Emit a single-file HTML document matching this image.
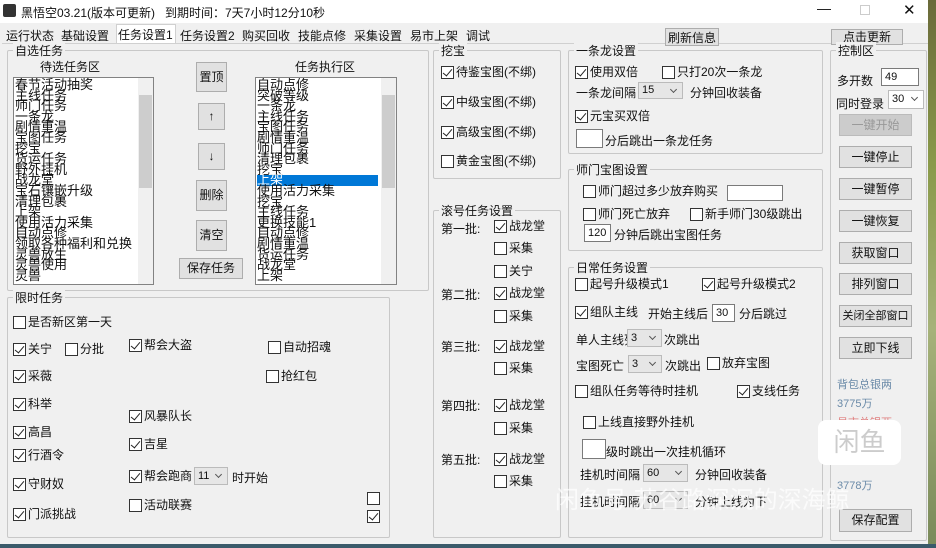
<!DOCTYPE html>
<html><head><meta charset="utf-8"><style>
*{box-sizing:border-box;margin:0;padding:0}
body{width:936px;height:548px;overflow:hidden;background:#f0f0f0;font-family:"Liberation Sans","Noto Sans CJK SC",sans-serif;font-size:12px;color:#111;position:relative}
.a{position:absolute;white-space:nowrap}
.g{position:absolute;border:1px solid #c8c8c8;border-radius:2px}
.g>b{position:absolute;top:-9px;left:5px;background:#f0f0f0;font-weight:normal;padding:0 2px;font-size:12px}
.k{position:absolute;white-space:nowrap;line-height:14px;display:flex;align-items:center}
.k i{display:inline-block;width:13px;height:13px;border:1px solid #333;background:#fff;margin-right:2px;position:relative}
.k.on i::after{content:"";position:absolute;left:3px;top:0px;width:4px;height:8px;border:solid #222;border-width:0 1.5px 1.5px 0;transform:rotate(40deg)}
.bt{position:absolute;background:#e1e1e1;border:1px solid #adadad;text-align:center;font-size:12px;white-space:nowrap;overflow:hidden}
.in{position:absolute;background:#fff;border:1px solid #7a7a7a;font-size:11px;padding-left:3px}
.sel{position:absolute;background:#e6e6e6;border:1px solid #bbb;font-size:11px;padding-left:3px}
.sel::after{content:"";position:absolute;right:6px;top:4px;width:4px;height:4px;border:solid #555;border-width:0 1px 1px 0;transform:rotate(45deg)}
.list{position:absolute;background:#fff;border:1px solid #828282;overflow:hidden;font-size:13px;line-height:10.6px;padding:2px 0 0 1px}
.sb{position:absolute;top:0;right:0;width:15px;height:100%;background:#f0f0f0}
.sb div{position:absolute;left:1px;width:13px;background:#cdcdcd}
</style></head><body>
<div class="a" style="left:0;top:0;width:936px;height:23px;background:#fff"></div>
<div class="a" style="left:3px;top:4px;width:13px;height:13px;background:#333;border-radius:2px"></div>
<div class="a" style="left:21px;top:4px;font-size:12px">黑悟空03.21(版本可更新)</div>
<div class="a" style="left:165px;top:4px;font-size:12px">到期时间：7天7小时12分10秒</div>
<div class="a" style="left:817px;top:0;font-size:14px">—</div>
<div class="a" style="left:860px;top:5px;width:10px;height:10px;border:1px solid #ccc"></div>
<div class="a" style="left:903px;top:1px;font-size:15px">✕</div>
<div class="a" style="left:928px;top:0;width:8px;height:548px;background:linear-gradient(#6a6a3a,#8a9a4a 30%,#a6b27a 60%,#7a8a5a)"></div>
<div class="a" style="left:116px;top:24px;width:60px;height:20px;background:#fff;border:1px solid #d0d0d0;border-bottom:none"></div>
<div class="a" style="left:6px;top:27px">运行状态</div>
<div class="a" style="left:61px;top:27px">基础设置</div>
<div class="a" style="left:118px;top:26px">任务设置1</div>
<div class="a" style="left:180px;top:27px">任务设置2</div>
<div class="a" style="left:242px;top:27px">购买回收</div>
<div class="a" style="left:298px;top:27px">技能点修</div>
<div class="a" style="left:354px;top:27px">采集设置</div>
<div class="a" style="left:410px;top:27px">易市上架</div>
<div class="a" style="left:466px;top:27px">调试</div>
<div class="a" style="left:2px;top:43px;width:926px;height:1px;background:#d0d0d0"></div>
<div class="bt" style="left:665px;top:28px;width:54px;height:18px">刷新信息</div>
<div class="bt" style="left:831px;top:29px;width:72px;height:16px;line-height:14px">点击更新</div>

<div class="g" style="left:7px;top:50px;width:422px;height:241px"><b>自选任务</b></div>
<div class="a" style="left:40px;top:58px">待选任务区</div>
<div class="a" style="left:295px;top:58px">任务执行区</div>
<div class="list" style="left:13px;top:77px;width:141px;height:208px">春节活动抽奖<br>主线任务<br>师门任务<br>一条龙<br>剧情重温<br>宝图任务<br>挖宝<br>货运任务<br>野外挂机<br>战龙堂<br>宝石镶嵌升级<br>清理包裹<br>上架<br>使用活力采集<br>自动点修<br>领取各种福利和兑换<br>灵兽放生<br>灵兽使用<br>灵兽<div class="sb"><div style="top:17px;height:93px"></div></div></div>
<div class="list" style="left:255px;top:77px;width:142px;height:208px">自动点修<br>突破等级<br>一条龙<br>主线任务<br>宝图任务<br>剧情重温<br>师门任务<br>清理包裹<br>挖宝<br><span style="background:#0078d7;color:#fff;display:inline-block;width:121px;height:10.6px;line-height:10px">上架</span><br>使用活力采集<br>挖宝<br>主线任务<br>更换技能1<br>自动点修<br>剧情重温<br>货运任务<br>战龙堂<br>上架<div class="sb"><div style="top:17px;height:93px"></div></div></div>
<div class="bt" style="left:196px;top:62px;width:31px;height:30px;line-height:28px">置顶</div>
<div class="bt" style="left:198px;top:103px;width:27px;height:27px;line-height:25px">↑</div>
<div class="bt" style="left:198px;top:143px;width:27px;height:27px;line-height:25px">↓</div>
<div class="bt" style="left:196px;top:180px;width:31px;height:31px;line-height:29px">删除</div>
<div class="bt" style="left:196px;top:220px;width:31px;height:31px;line-height:29px">清空</div>
<div class="bt" style="left:179px;top:258px;width:64px;height:21px;line-height:19px">保存任务</div>

<div class="g" style="left:7px;top:297px;width:383px;height:241px"><b>限时任务</b></div>
<div class="k" style="left:13px;top:315px"><i></i>是否新区第一天</div>
<div class="k on" style="left:13px;top:342px"><i></i>关宁</div>
<div class="k" style="left:65px;top:342px"><i></i>分批</div>
<div class="k on" style="left:13px;top:369px"><i></i>采薇</div>
<div class="k on" style="left:13px;top:397px"><i></i>科举</div>
<div class="k on" style="left:13px;top:425px"><i></i>高昌</div>
<div class="k on" style="left:13px;top:448px"><i></i>行酒令</div>
<div class="k on" style="left:13px;top:477px"><i></i>守财奴</div>
<div class="k on" style="left:13px;top:507px"><i></i>门派挑战</div>
<div class="k on" style="left:129px;top:338px"><i></i>帮会大盗</div>
<div class="k on" style="left:129px;top:409px"><i></i>风暴队长</div>
<div class="k on" style="left:129px;top:437px"><i></i>吉星</div>
<div class="k on" style="left:129px;top:469px"><i></i>帮会跑商</div>
<div class="sel" style="left:194px;top:467px;width:34px;height:18px;line-height:16px">11</div>
<div class="a" style="left:232px;top:469px">时开始</div>
<div class="k" style="left:129px;top:498px"><i></i>活动联赛</div>
<div class="k" style="left:268px;top:340px"><i></i>自动招魂</div>
<div class="k" style="left:266px;top:369px"><i></i>抢红包</div>
<div class="k" style="left:367px;top:492px"><i></i></div>
<div class="k on" style="left:367px;top:510px"><i></i></div>

<div class="g" style="left:433px;top:50px;width:128px;height:129px"><b>挖宝</b></div>
<div class="k on" style="left:441px;top:65px"><i></i>待鉴宝图(不绑)</div>
<div class="k on" style="left:441px;top:95px"><i></i>中级宝图(不绑)</div>
<div class="k on" style="left:441px;top:125px"><i></i>高级宝图(不绑)</div>
<div class="k" style="left:441px;top:154px"><i></i>黄金宝图(不绑)</div>

<div class="g" style="left:433px;top:210px;width:128px;height:328px"><b>滚号任务设置</b></div>
<div class="a" style="left:441px;top:220px">第一批:</div>
<div class="k on" style="left:494px;top:219px"><i></i>战龙堂</div>
<div class="k" style="left:494px;top:241px"><i></i>采集</div>
<div class="k" style="left:494px;top:264px"><i></i>关宁</div>
<div class="a" style="left:441px;top:286px">第二批:</div>
<div class="k on" style="left:494px;top:286px"><i></i>战龙堂</div>
<div class="k" style="left:494px;top:309px"><i></i>采集</div>
<div class="a" style="left:441px;top:338px">第三批:</div>
<div class="k on" style="left:494px;top:339px"><i></i>战龙堂</div>
<div class="k" style="left:494px;top:361px"><i></i>采集</div>
<div class="a" style="left:441px;top:397px">第四批:</div>
<div class="k on" style="left:494px;top:398px"><i></i>战龙堂</div>
<div class="k" style="left:494px;top:421px"><i></i>采集</div>
<div class="a" style="left:441px;top:451px">第五批:</div>
<div class="k on" style="left:494px;top:452px"><i></i>战龙堂</div>
<div class="k" style="left:494px;top:474px"><i></i>采集</div>

<div class="g" style="left:568px;top:50px;width:255px;height:104px"><b>一条龙设置</b></div>
<div class="k on" style="left:575px;top:65px"><i></i>使用双倍</div>
<div class="k" style="left:662px;top:65px"><i></i>只打20次一条龙</div>
<div class="a" style="left:576px;top:84px">一条龙间隔</div>
<div class="sel" style="left:638px;top:82px;width:45px;height:17px;line-height:15px">15</div>
<div class="a" style="left:690px;top:84px">分钟回收装备</div>
<div class="k on" style="left:575px;top:109px"><i></i>元宝买双倍</div>
<div class="in" style="left:576px;top:129px;width:27px;height:19px"></div>
<div class="a" style="left:605px;top:132px">分后跳出一条龙任务</div>

<div class="g" style="left:568px;top:169px;width:255px;height:82px"><b>师门宝图设置</b></div>
<div class="k" style="left:583px;top:184px"><i></i>师门超过多少放弃购买</div>
<div class="in" style="left:727px;top:185px;width:56px;height:16px"></div>
<div class="k" style="left:583px;top:207px"><i></i>师门死亡放弃</div>
<div class="k" style="left:690px;top:207px"><i></i>新手师门30级跳出</div>
<div class="in" style="left:584px;top:224px;width:27px;height:18px;line-height:16px">120</div>
<div class="a" style="left:614px;top:226px">分钟后跳出宝图任务</div>

<div class="g" style="left:568px;top:267px;width:255px;height:271px"><b>日常任务设置</b></div>
<div class="k" style="left:575px;top:277px"><i></i>起号升级模式1</div>
<div class="k on" style="left:702px;top:277px"><i></i>起号升级模式2</div>
<div class="k on" style="left:575px;top:305px"><i></i>组队主线</div>
<div class="a" style="left:648px;top:305px">开始主线后</div>
<div class="in" style="left:712px;top:304px;width:23px;height:18px;line-height:16px">30</div>
<div class="a" style="left:739px;top:305px">分后跳过</div>
<div class="a" style="left:576px;top:331px">单人主线列</div>
<div class="sel" style="left:627px;top:329px;width:35px;height:18px;line-height:16px">3</div>
<div class="a" style="left:664px;top:331px">次跳出</div>
<div class="a" style="left:576px;top:357px">宝图死亡</div>
<div class="sel" style="left:628px;top:355px;width:34px;height:18px;line-height:16px">3</div>
<div class="a" style="left:665px;top:357px">次跳出</div>
<div class="k" style="left:707px;top:356px"><i></i>放弃宝图</div>
<div class="k" style="left:575px;top:384px"><i></i>组队任务等待时挂机</div>
<div class="k on" style="left:737px;top:384px"><i></i>支线任务</div>
<div class="k" style="left:583px;top:415px"><i></i>上线直接野外挂机</div>
<div class="in" style="left:582px;top:439px;width:24px;height:20px"></div>
<div class="a" style="left:606px;top:443px">级时跳出一次挂机循环</div>
<div class="a" style="left:580px;top:466px">挂机时间隔</div>
<div class="sel" style="left:643px;top:464px;width:45px;height:18px;line-height:16px">60</div>
<div class="a" style="left:695px;top:466px">分钟回收装备</div>
<div class="a" style="left:580px;top:493px">挂机时间隔</div>
<div class="sel" style="left:643px;top:491px;width:45px;height:18px;line-height:16px">60</div>
<div class="a" style="left:695px;top:493px">分钟上线为下</div>

<div class="g" style="left:830px;top:50px;width:97px;height:491px"><b>控制区</b></div>
<div class="a" style="left:837px;top:72px">多开数</div>
<div class="in" style="left:881px;top:68px;width:38px;height:18px;line-height:16px">49</div>
<div class="a" style="left:836px;top:95px">同时登录</div>
<div class="sel" style="left:888px;top:90px;width:36px;height:19px;line-height:17px;background:#fff">30</div>
<div class="bt" style="left:839px;top:114px;width:73px;height:22px;line-height:20px;color:#999;background:#ccc;border-color:#bbb">一键开始</div>
<div class="bt" style="left:839px;top:146px;width:73px;height:22px;line-height:20px">一键停止</div>
<div class="bt" style="left:839px;top:178px;width:73px;height:22px;line-height:20px">一键暂停</div>
<div class="bt" style="left:839px;top:210px;width:73px;height:22px;line-height:20px">一键恢复</div>
<div class="bt" style="left:839px;top:242px;width:73px;height:22px;line-height:20px">获取窗口</div>
<div class="bt" style="left:839px;top:273px;width:73px;height:22px;line-height:20px">排列窗口</div>
<div class="bt" style="left:839px;top:305px;width:73px;height:22px;line-height:20px;font-size:11px;padding:0">关闭全部窗口</div>
<div class="bt" style="left:839px;top:337px;width:73px;height:22px;line-height:20px">立即下线</div>
<div class="a" style="left:837px;top:376px;color:#6a8aa8;font-size:11px">背包总银两</div>
<div class="a" style="left:837px;top:395px;color:#6a8aa8;font-size:11px">3775万</div>
<div class="a" style="left:837px;top:414px;color:#e08080;font-size:11px">易市总银两</div>
<div class="a" style="left:818px;top:420px;width:83px;height:45px;background:#fff;border-radius:8px;color:#ccc;font-size:26px;text-align:center;line-height:45px">闲鱼</div>
<div class="a" style="left:837px;top:477px;color:#6a8aa8;font-size:11px">3778万</div>
<div class="bt" style="left:839px;top:509px;width:73px;height:23px;line-height:21px">保存配置</div>
<div class="a" style="left:555px;top:480px;color:rgba(255,255,255,.75);font-size:24px">闲鱼号 苏谷路深沉的深海鲸</div>
<div class="a" style="left:0;top:544px;width:936px;height:4px;background:#3a5a6a"></div>
</body></html>
